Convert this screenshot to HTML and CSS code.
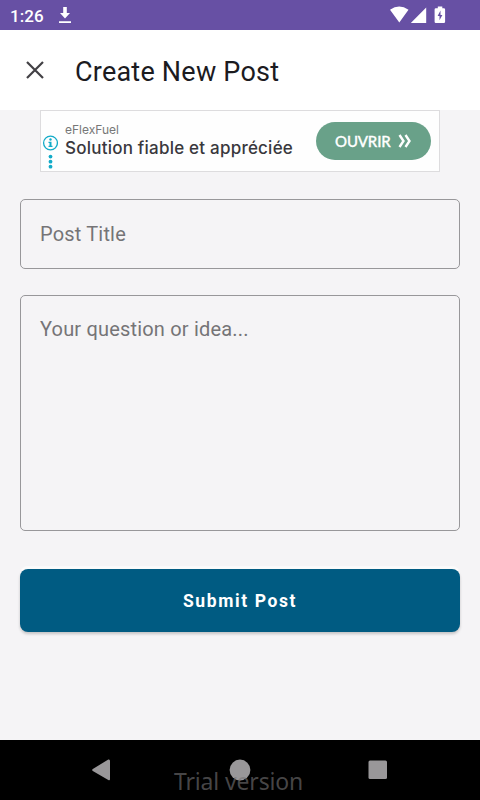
FILE: index.html
```html
<!DOCTYPE html>
<html lang="en">
<head>
<meta charset="utf-8">
<title>Create New Post</title>
<link rel="stylesheet" href="styles.css">
</head>
<body>
<div class="screen">
  <div class="status">
    <span class="clock">1:26</span>
    <svg class="download" width="14" height="18" viewBox="0 0 14 18" fill="#fff"><path d="M5.2 1h3.600v6H12l-5 5.500L2 7h3.200zM1 15.200h12v1.700H1z"/></svg>
    <svg class="signals" width="60" height="20" viewBox="0 0 60 20" fill="#fff"><path d="M0 4.800Q9.200-1.800 18.500 4.800L9.300 17.600zM20.800 18 36.200 2.600V18zM45.800 3.200h2V1.400h4.500v1.800h1.500q1.300 0 1.300 1.300v12.200q0 1.300-1.300 1.300h-8q-1.200 0-1.200-1.300V4.500q0-1.300 1.200-1.300z"/><path fill="#6750a4" d="M50.500 5.500 47.600 11h1.900v4.200L52.400 10h-1.900z"/></svg>
  </div>
  <header class="appbar">
    <svg class="close" width="18" height="18" viewBox="0 0 18 18" fill="none" stroke="#424045" stroke-width="2.200"><path d="m1 1 16 16M17 1 1 17"/></svg>
    <h1>Create New Post</h1>
  </header>
  <main>
    <section class="ad">
      <div class="adinfo">
        <svg width="16" height="34" viewBox="0 0 16 34" fill="#12abc8"><circle cx="8.500" cy="8" r="6.900" fill="none" stroke="#12abc8" stroke-width="1.300"/><circle cx="8.500" cy="4.500" r="1.200"/><path d="M6.500 6.800h3v4h1v1.100h-4v-1.100h1V8h-1z"/><circle cx="8.500" cy="21.600" r="1.900"/><circle cx="8.500" cy="26.700" r="1.900"/><circle cx="8.500" cy="31.700" r="1.900"/></svg>
      </div>
      <div class="adcopy">
        <span class="brand">eFlexFuel</span>
        <span class="headline">Solution fiable et appréciée</span>
      </div>
      <div class="open"><span>OUVRIR</span><svg width="14" height="14" viewBox="0 0 14 14" fill="none" stroke="#fff" stroke-width="2.400"><path d="m1.500 1 4 6-4 6M7.500 1l4 6-4 6"/></svg></div>
    </section>
    <div class="field title">Post Title</div>
    <div class="field idea">Your question or idea...</div>
    <div class="submit">Submit Post</div>
  </main>
  <nav class="navbar">
    <svg width="20" height="22" viewBox="0 0 20 22" fill="#999799"><path d="M17.300.500Q19 0 19 1.900v18.200q0 1.900-1.700.9L1.800 12q-1.300-1 0-2z"/></svg>
    <svg width="22" height="22" viewBox="0 0 22 22" fill="#999799"><circle cx="11" cy="11" r="10.400"/></svg>
    <svg width="20" height="20" viewBox="0 0 20 20" fill="#999799"><rect x=".5" y=".5" width="18.500" height="18.500" rx="1.500"/></svg>
    <span class="watermark">Trial version</span>
  </nav>
</div>
</body>
</html>
```
FILE: styles.css
```css
* { box-sizing: border-box; }
body { margin: 0; font-family: Roboto, sans-serif; }
svg { display: block; flex: none; }
.screen { width: 480px; height: 800px; display: flex; flex-direction: column; background: #f5f4f6; overflow: hidden; }
.status { height: 30px; flex: none; display: flex; align-items: center; background: #6750a4; padding: 0 30px 0 10px; color: #fff; }
.clock { width: 48px; font-size: 17px; font-weight: 500; letter-spacing: .1px; line-height: 30px; padding-top: 2px; }
.signals { margin-left: auto; }
.appbar { height: 80px; flex: none; display: flex; align-items: center; background: #fff; padding-left: 26px; }
h1 { margin: 3px 0 0 31px; font-size: 27px; font-weight: 400; line-height: 32px; letter-spacing: .22px; color: #1c1b1f; white-space: nowrap; }
main { flex: 1; padding: 0 20px; }
.ad { height: 62px; margin: 0 20px; border: 1px solid #dddcde; background: #fefefe; display: flex; }
.adinfo { width: 24px; padding: 24px 0 0 1px; }
.adcopy { width: 251px; display: flex; flex-direction: column; white-space: nowrap; font-family: Inter, sans-serif; }
.brand { font-size: 12px; line-height: 16px; margin-top: 11px; color: #777; }
.headline { font-size: 17px; line-height: 21px; font-weight: 500; letter-spacing: .22px; color: #39383d; }
.open { width: 115px; height: 38px; margin-top: 11px; border-radius: 19px; background: #69a189; color: #fff; display: flex; align-items: center; padding-left: 19px; gap: 7px; font: 500 15px Lato, sans-serif; }
.open span { width: 56px; white-space: nowrap; -webkit-text-stroke: .3px #fff; letter-spacing: -.15px; }
.field { border: 1px solid #98979a; border-radius: 5px; padding: 18px 19px; font-size: 20px; line-height: 30px; letter-spacing: .18px; color: #757477; }
.title { height: 70px; margin-top: 27px; padding-top: 19px; }
.idea { height: 236px; margin-top: 26px; }
.submit { height: 63px; margin-top: 38px; border-radius: 8px; background: #005b82; box-shadow: 0 2px 3px #0003, 0 -3px 1px #fff9; color: #fff; font-size: 17.5px; font-weight: 700; letter-spacing: 1.6px; line-height: 65px; text-align: center; }
.navbar { position: relative; height: 60px; flex: none; background: #000; display: flex; align-items: center; justify-content: space-between; padding: 0 92px 0 91px; }
.watermark { position: absolute; left: 174px; top: 27px; font: 23px/28px "Noto Sans", sans-serif; letter-spacing: -.15px; color: #77757799; white-space: nowrap; }
```
